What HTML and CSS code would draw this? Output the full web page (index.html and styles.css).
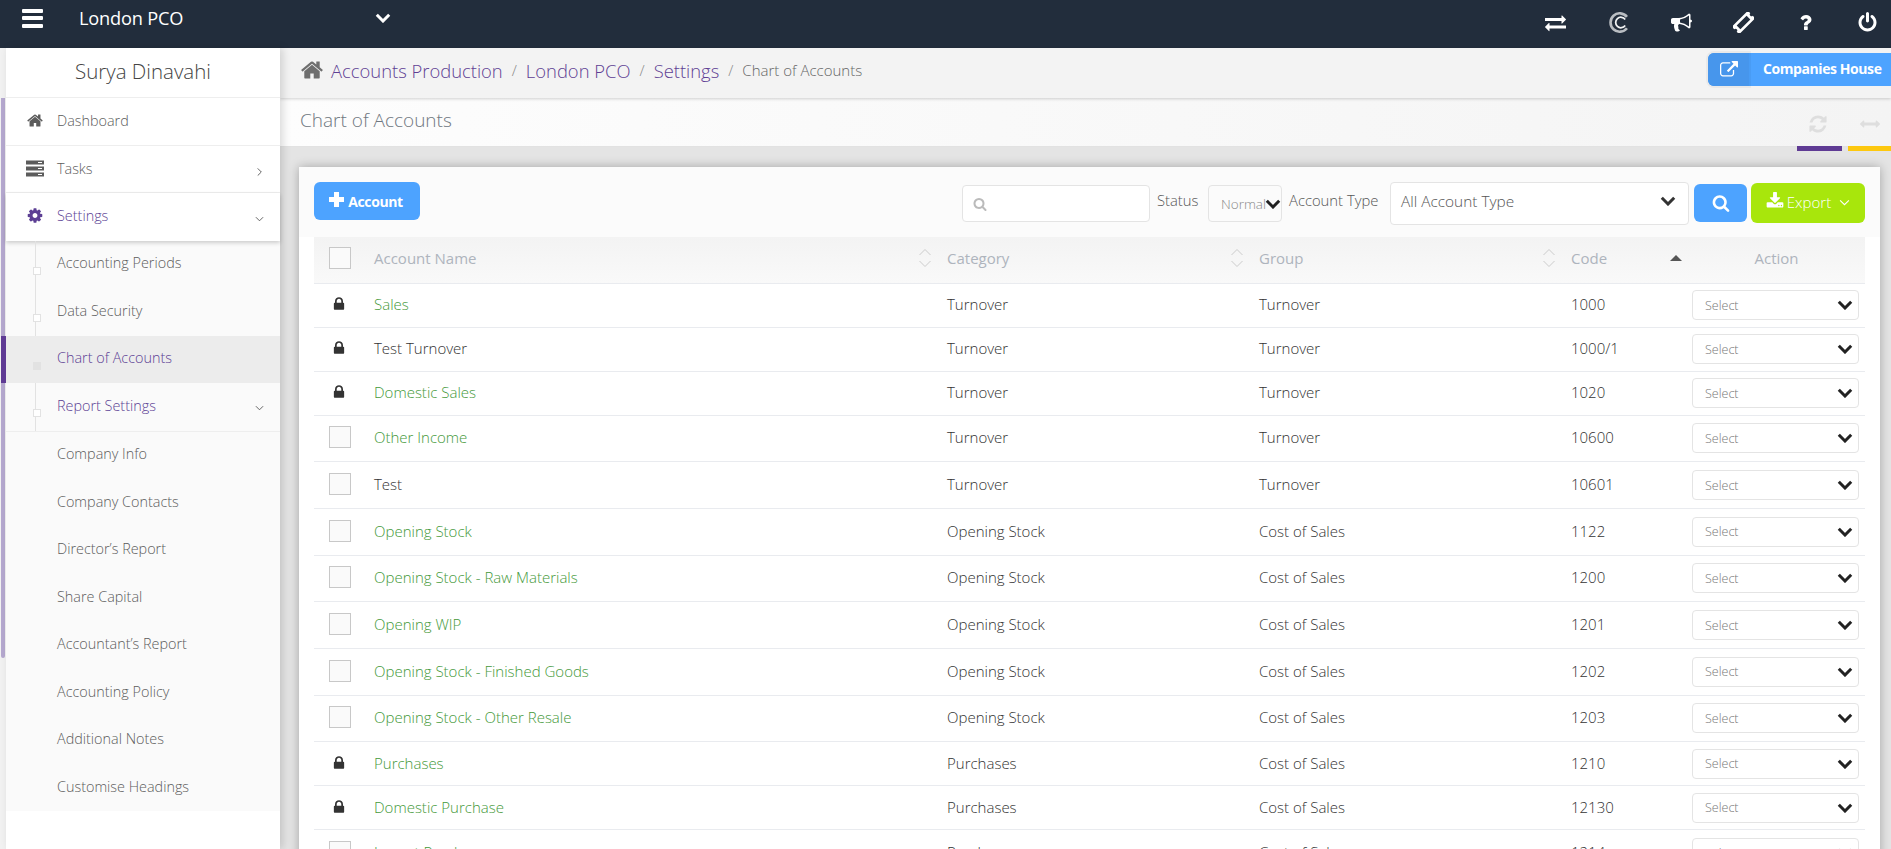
FILE: index.html
```html
<!DOCTYPE html>
<html lang="en">
<head>
<meta charset="utf-8">
<title>Chart of Accounts</title>
<link rel="stylesheet" href="styles.css">
</head>
<body>
<svg class="sprite" xmlns="http://www.w3.org/2000/svg">
  <symbol id="i-home" viewBox="0 0 1792 1792"><path d="M1472 992v480q0 26-19 45t-45 19h-384v-384h-256v384h-384q-26 0-45-19t-19-45v-480q0-1 .5-3t.5-3l575-474 575 474q1 2 1 6zm223-69l-62 74q-8 9-21 11h-3q-13 0-21-7l-692-577-692 577q-12 8-24 7-13-2-21-11l-62-74q-8-10-7-23.5t11-21.5l719-599q32-26 76-26t76 26l244 204v-195q0-14 9-23t23-9h192q14 0 23 9t9 23v408l219 182q10 8 11 21.5t-7 23.5z"/></symbol>
  <symbol id="i-cog" viewBox="0 0 1792 1792"><path d="M1152 896q0-106-75-181t-181-75-181 75-75 181 75 181 181 75 181-75 75-181zm512-109v222q0 12-8 23t-20 13l-185 28q-19 54-39 91 35 50 107 138 10 12 10 25t-9 23q-27 37-99 108t-94 71q-12 0-26-9l-138-108q-44 23-91 38-16 136-29 186-7 28-36 28h-222q-14 0-24.5-8.5t-11.5-21.5l-28-184q-49-16-90-37l-141 107q-10 9-25 9-14 0-25-11-126-114-165-168-7-10-7-23 0-12 8-23 15-21 51-66.5t54-70.5q-27-50-41-99l-183-27q-13-2-21-12.5t-8-23.5v-222q0-12 8-23t19-13l186-28q14-46 39-92-40-57-107-138-10-12-10-24 0-10 9-23 26-36 98.5-107.5t94.5-71.5q13 0 26 10l138 107q44-23 91-38 16-136 29-186 7-28 36-28h222q14 0 24.5 8.5t11.5 21.5l28 184q49 16 90 37l142-107q9-9 24-9 13 0 25 10 129 119 165 170 7 8 7 22 0 12-8 23-15 21-51 66.5t-54 70.5q26 50 41 98l183 28q13 2 21 12.5t8 23.5z"/></symbol>
  <symbol id="i-search" viewBox="0 0 1792 1792"><path d="M1216 832q0-185-131.5-316.5t-316.5-131.5-316.5 131.5-131.5 316.5 131.5 316.5 316.5 131.5 316.5-131.5 131.5-316.5zm512 832q0 52-38 90t-90 38q-54 0-90-38l-343-342q-179 124-399 124-143 0-273.5-55.5t-225-150-150-225-55.5-273.5 55.5-273.5 150-225 225-150 273.5-55.5 273.5 55.5 225 150 150 225 55.5 273.5q0 220-124 399l343 343q37 37 37 90z"/></symbol>
  <symbol id="i-lock" viewBox="0 0 1792 1792"><path d="M640 768h512v-192q0-106-75-181t-181-75-181 75-75 181v192zm832 96v576q0 40-28 68t-68 28h-960q-40 0-68-28t-28-68v-576q0-40 28-68t68-28h32v-192q0-184 132-316t316-132 316 132 132 316v192h32q40 0 68 28t28 68z"/></symbol>
  <symbol id="i-power" viewBox="0 0 1792 1792"><path d="M1664 896q0 156-61 298t-164 245-245 164-298 61-298-61-245-164-164-245-61-298q0-182 80.5-343t226.5-270q43-32 95.5-25t83.5 50q32 42 24.5 94.5t-49.5 84.5q-98 74-151.5 181t-53.5 228q0 104 40.5 198.5t109.5 163.5 163.5 109.5 198.5 40.5 198.5-40.5 163.5-109.5 109.5-163.5 40.5-198.5q0-121-53.5-228t-151.5-181q-42-32-49.5-84.5t24.5-94.5q31-43 84-50t95 25q146 109 226.5 270t80.5 343zm-640-768v640q0 52-38 90t-90 38-90-38-38-90v-640q0-52 38-90t90-38 90 38 38 90z"/></symbol>
  <symbol id="i-bullhorn" viewBox="0 0 1792 1792"><path d="M1664 640q53 0 90.5 37.5t37.5 90.5-37.5 90.5-90.5 37.5v384q0 52-38 90t-90 38q-417-347-812-380-58 19-91 66t-31 100.5 40 92.5q-20 33-23 65.5t6 58 33.5 55 48 50 61.5 50.5q-29 58-111.5 83t-168.5 11.5-132-55.5q-7-23-29.5-87.5t-32-94.5-23-89-15-101 3.5-98.5 22-110.5h-122q-66 0-113-47t-47-113v-192q0-66 47-113t113-47h480q435 0 896-384 52 0 90 38t38 90v384zm-128 604v-954q-394 302-768 343v270q377 42 768 341z"/></symbol>
  <symbol id="i-exchange" viewBox="0 0 1792 1792"><path d="M1792 1184v192q0 13-9.5 22.5t-22.5 9.5h-1376v192q0 13-9.5 22.5t-22.5 9.5q-12 0-24-10l-319-320q-9-9-9-22 0-14 9-23l320-320q9-9 23-9 13 0 22.5 9.5t9.5 22.5v192h1376q13 0 22.5 9.5t9.5 22.5zm0-544q0 14-9 23l-320 320q-9 9-23 9-13 0-22.5-9.5t-9.5-22.5v-192h-1376q-13 0-22.5-9.5t-9.5-22.5v-192q0-13 9.5-22.5t22.5-9.5h1376v-192q0-14 9-23t23-9q12 0 24 10l319 319q9 9 9 23z"/></symbol>
  <symbol id="i-question" viewBox="0 0 1792 1792"><path d="M1088 1256v240q0 16-12 28t-28 12h-240q-16 0-28-12t-12-28v-240q0-16 12-28t28-12h240q16 0 28 12t12 28zm316-600q0 54-15.5 101t-35 76.5-55 59.5-57.5 43.5-61 35.5q-41 23-68.5 65t-27.5 67q0 17-12 32.5t-28 15.5h-240q-15 0-25.5-18.5t-10.5-37.5v-45q0-83 65-156.5t143-108.5q59-27 84-56t25-76q0-42-46.5-74t-107.5-32q-65 0-108 29-35 25-107 115-13 16-31 16-12 0-25-8l-164-125q-13-10-15.5-25t5.5-28q160-266 464-266 80 0 161 31t146 83 106 127.5 41 158.5z"/></symbol>
  <symbol id="i-download" viewBox="0 0 1792 1792"><path d="M1344 1344q0-26-19-45t-45-19-45 19-19 45 19 45 45 19 45-19 19-45zm256 0q0-26-19-45t-45-19-45 19-19 45 19 45 45 19 45-19 19-45zm128-224v320q0 40-28 68t-68 28h-1472q-40 0-68-28t-28-68v-320q0-40 28-68t68-28h465l135 136q58 56 136 56t136-56l136-136h464q40 0 68 28t28 68zm-325-569q17 41-14 70l-448 448q-18 19-45 19t-45-19l-448-448q-31-29-14-70 17-39 59-39h256v-448q0-26 19-45t45-19h256q26 0 45 19t19 45v448h256q42 0 59 39z"/></symbol>
  <symbol id="i-external" viewBox="0 0 1792 1792"><path d="M1408 928v320q0 119-84.5 203.5t-203.5 84.5h-832q-119 0-203.5-84.5t-84.5-203.5v-832q0-119 84.5-203.5t203.5-84.5h704q14 0 23 9t9 23v64q0 14-9 23t-23 9h-704q-66 0-113 47t-47 113v832q0 66 47 113t113 47h832q66 0 113-47t47-113v-320q0-14 9-23t23-9h64q14 0 23 9t9 23zm384-864v512q0 26-19 45t-45 19-45-19l-176-176-652 652q-10 10-23 10t-23-10l-114-114q-10-10-10-23t10-23l652-652-176-176q-19-19-19-45t19-45 45-19h512q26 0 45 19t19 45z"/></symbol>
  <symbol id="i-refresh" viewBox="0 0 1792 1792"><path d="M1639 1056q0 5-1 7-64 268-268 434.5t-478 166.5q-146 0-282.5-55t-243.5-157l-129 129q-19 19-45 19t-45-19-19-45v-448q0-26 19-45t45-19h448q26 0 45 19t19 45-19 45l-137 137q71 66 161 102t187 36q134 0 250-65t186-179q11-17 53-117 8-23 30-23h192q13 0 22.5 9.5t9.5 22.5zm25-800v448q0 26-19 45t-45 19h-448q-26 0-45-19t-19-45 19-45l138-138q-148-137-349-137-134 0-250 65t-186 179q-11 17-53 117-8 23-30 23h-199q-13 0-22.5-9.5t-9.5-22.5v-7q65-268 270-434.5t480-166.5q146 0 284 55.5t245 156.5l130-129q19-19 45-19t45 19 19 45z"/></symbol>
  <symbol id="i-arrows-h" viewBox="0 0 1792 1792"><path d="M1792 896q0 26-19 45l-256 256q-19 19-45 19t-45-19-19-45v-128h-1024v128q0 26-19 45t-45 19-45-19l-256-256q-19-19-19-45t19-45l256-256q19-19 45-19t45 19 19 45v128h1024v-128q0-26 19-45t45-19 45 19l256 256q19 19 19 45z"/></symbol>
  <symbol id="i-ticket" viewBox="0 0 24 24"><g transform="rotate(-45 12 12)"><path fill-rule="evenodd" d="M-1 6h26v4a2 2 0 0 0 0 4v4H-1v-4a2 2 0 0 0 0-4zM4 9v6h16V9z"/></g></symbol>
  <symbol id="i-cc" viewBox="0 0 24 24"><path d="M20.500 5.500A10.500 10.500 0 1 0 20.500 18.500" fill="none" stroke="#b9bdc2" stroke-width="3"/><path d="M18.500 8.500A6 6 0 1 0 18.500 15.500" fill="none" stroke="#f2f3f4" stroke-width="2"/></symbol>
  <symbol id="i-server" viewBox="0 0 18 16"><path d="M0 0h18v4H0zM0 6h18v4H0zM0 12h18v4H0z"/><path fill="#fff" d="M12 1.400h4v1.200h-4zM12 7.400h4v1.200h-4zM12 13.400h4v1.200h-4z"/></symbol>
  <symbol id="i-chev" viewBox="0 0 16 10"><path d="M1.800 1.800 8 8 14.200 1.800" fill="none" stroke="currentColor" stroke-width="3"/></symbol>
  <symbol id="i-thin-chev" viewBox="0 0 10 6"><path d="M1 1 5 5 9 1" fill="none" stroke="currentColor" stroke-width="1"/></symbol>
  <symbol id="i-sort" viewBox="0 0 14 22"><path d="M1.500 8 7 2.500 12.500 8M1.500 14 7 19.500 12.500 14" fill="none" stroke="currentColor" stroke-width="1"/></symbol>
</svg>

<header class="topbar">
  <div class="top-left">
    <button class="burger" aria-label="Menu"><span></span><span></span><span></span></button>
    <div class="firm">London PCO</div>
    <svg class="firm-chev"><use href="#i-chev"/></svg>
  </div>
  <nav class="top-icons">
    <svg class="ti ti-ex"><use href="#i-exchange"/></svg>
    <svg class="ti"><use href="#i-cc"/></svg>
    <svg class="ti"><use href="#i-bullhorn"/></svg>
    <svg class="ti"><use href="#i-ticket"/></svg>
    <svg class="ti"><use href="#i-question"/></svg>
    <svg class="ti"><use href="#i-power"/></svg>
  </nav>
</header>

<div class="shell">
  <div class="rail"><div class="rail-thumb"></div></div>

  <aside class="sidebar">
    <div class="user">Surya Dinavahi</div>
    <a class="nav-main"><svg class="nav-ic"><use href="#i-home"/></svg>Dashboard</a>
    <a class="nav-main"><svg class="nav-ic"><use href="#i-server"/></svg>Tasks<svg class="nav-chev nav-chev-r"><use href="#i-thin-chev"/></svg></a>
    <a class="nav-main nav-open"><svg class="nav-ic"><use href="#i-cog"/></svg>Settings<svg class="nav-chev"><use href="#i-thin-chev"/></svg></a>
    <div class="subnav">
      <div class="subgroup">
        <a class="sub bul">Accounting Periods</a>
        <a class="sub bul">Data Security</a>
        <a class="sub bul sub-active">Chart of Accounts</a>
        <a class="sub bul sub-purple">Report Settings<svg class="nav-chev"><use href="#i-thin-chev"/></svg></a>
      </div>
      <a class="sub">Company Info</a>
      <a class="sub">Company Contacts</a>
      <a class="sub">Director’s Report</a>
      <a class="sub">Share Capital</a>
      <a class="sub">Accountant’s Report</a>
      <a class="sub">Accounting Policy</a>
      <a class="sub">Additional Notes</a>
      <a class="sub">Customise Headings</a>
    </div>
  </aside>

  <main class="main">
    <div class="crumbs">
      <svg class="crumb-home"><use href="#i-home"/></svg>
      <a class="crumb">Accounts Production</a><span class="sep">/</span>
      <a class="crumb">London PCO</a><span class="sep">/</span>
      <a class="crumb">Settings</a><span class="sep">/</span>
      <span class="crumb-cur">Chart of Accounts</span>
      <a class="ch-btn"><span class="ch-ic"><svg><use href="#i-external"/></svg></span><span class="ch-txt">Companies House</span></a>
    </div>

    <div class="titlebar">
      <h1>Chart of Accounts</h1>
      <div class="tools">
        <div class="tool tool-p"><svg><use href="#i-refresh"/></svg></div>
        <div class="tool tool-y"><svg><use href="#i-arrows-h"/></svg></div>
      </div>
    </div>

    <div class="content">
      <section class="card">
        <div class="toolbar">
          <button class="btn-add"><span class="plus"></span>Account</button>
          <div class="filters">
            <div class="search"><svg><use href="#i-search"/></svg></div>
            <label class="flabel">Status</label>
            <div class="status"><span>Normal</span><svg><use href="#i-chev"/></svg></div>
            <label class="flabel flabel-type">Account Type</label>
            <div class="acct-type"><span>All Account Type</span><svg><use href="#i-chev"/></svg></div>
            <button class="btn-search"><svg><use href="#i-search"/></svg></button>
            <button class="btn-export"><svg class="dl"><use href="#i-download"/></svg>Export<svg class="ex-chev"><use href="#i-thin-chev"/></svg></button>
          </div>
        </div>

        <table class="grid">
          <colgroup><col class="c1"><col class="c2"><col class="c3"><col class="c4"><col class="c5"><col class="c6"></colgroup>
          <thead>
            <tr>
              <th><span class="cb cb-h"></span></th>
              <th><div class="th-in">Account Name<svg class="srt"><use href="#i-sort"/></svg></div></th>
              <th><div class="th-in">Category<svg class="srt"><use href="#i-sort"/></svg></div></th>
              <th><div class="th-in">Group<svg class="srt"><use href="#i-sort"/></svg></div></th>
              <th><div class="th-in th-code">Code<span class="tri"></span></div></th>
              <th class="th-action">Action</th>
            </tr>
          </thead>
          <tbody>
            <tr class="r-lock"><td><svg class="lock"><use href="#i-lock"/></svg></td><td class="lnk">Sales</td><td>Turnover</td><td>Turnover</td><td>1000</td><td><div class="sel"><span>Select</span><svg><use href="#i-chev"/></svg></div></td></tr>
            <tr class="r-lock"><td><svg class="lock"><use href="#i-lock"/></svg></td><td>Test Turnover</td><td>Turnover</td><td>Turnover</td><td>1000/1</td><td><div class="sel"><span>Select</span><svg><use href="#i-chev"/></svg></div></td></tr>
            <tr class="r-lock"><td><svg class="lock"><use href="#i-lock"/></svg></td><td class="lnk">Domestic Sales</td><td>Turnover</td><td>Turnover</td><td>1020</td><td><div class="sel"><span>Select</span><svg><use href="#i-chev"/></svg></div></td></tr>
            <tr class="r-cb"><td><span class="cb"></span></td><td class="lnk">Other Income</td><td>Turnover</td><td>Turnover</td><td>10600</td><td><div class="sel"><span>Select</span><svg><use href="#i-chev"/></svg></div></td></tr>
            <tr class="r-cb"><td><span class="cb"></span></td><td>Test</td><td>Turnover</td><td>Turnover</td><td>10601</td><td><div class="sel"><span>Select</span><svg><use href="#i-chev"/></svg></div></td></tr>
            <tr class="r-cb"><td><span class="cb"></span></td><td class="lnk">Opening Stock</td><td>Opening Stock</td><td>Cost of Sales</td><td>1122</td><td><div class="sel"><span>Select</span><svg><use href="#i-chev"/></svg></div></td></tr>
            <tr class="r-cb"><td><span class="cb"></span></td><td class="lnk">Opening Stock - Raw Materials</td><td>Opening Stock</td><td>Cost of Sales</td><td>1200</td><td><div class="sel"><span>Select</span><svg><use href="#i-chev"/></svg></div></td></tr>
            <tr class="r-cb"><td><span class="cb"></span></td><td class="lnk">Opening WIP</td><td>Opening Stock</td><td>Cost of Sales</td><td>1201</td><td><div class="sel"><span>Select</span><svg><use href="#i-chev"/></svg></div></td></tr>
            <tr class="r-cb"><td><span class="cb"></span></td><td class="lnk">Opening Stock - Finished Goods</td><td>Opening Stock</td><td>Cost of Sales</td><td>1202</td><td><div class="sel"><span>Select</span><svg><use href="#i-chev"/></svg></div></td></tr>
            <tr class="r-cb"><td><span class="cb"></span></td><td class="lnk">Opening Stock - Other Resale</td><td>Opening Stock</td><td>Cost of Sales</td><td>1203</td><td><div class="sel"><span>Select</span><svg><use href="#i-chev"/></svg></div></td></tr>
            <tr class="r-lock"><td><svg class="lock"><use href="#i-lock"/></svg></td><td class="lnk">Purchases</td><td>Purchases</td><td>Cost of Sales</td><td>1210</td><td><div class="sel"><span>Select</span><svg><use href="#i-chev"/></svg></div></td></tr>
            <tr class="r-lock"><td><svg class="lock"><use href="#i-lock"/></svg></td><td class="lnk">Domestic Purchase</td><td>Purchases</td><td>Cost of Sales</td><td>12130</td><td><div class="sel"><span>Select</span><svg><use href="#i-chev"/></svg></div></td></tr>
            <tr class="r-cb"><td><span class="cb"></span></td><td class="lnk">Import Purchases</td><td>Purchases</td><td>Cost of Sales</td><td>1214</td><td><div class="sel"><span>Select</span><svg><use href="#i-chev"/></svg></div></td></tr>
          </tbody>
        </table>
      </section>
    </div>
  </main>
</div>
</body>
</html>
```

FILE: styles.css
```css
* { box-sizing: border-box; }
html, body { margin: 0; height: 849px; overflow: hidden; }
body { font-family: "Open Sans", "Noto Sans", sans-serif; font-size: 15px; font-weight: 300; color: #333; background: #fff; }
.sprite { display: none; }
svg { fill: currentColor; display: block; }
button { font: inherit; border: 0; padding: 0; cursor: pointer; }

/* top bar */
.topbar { height: 48px; background: #222d3c; color: #fff; display: flex; align-items: center; justify-content: space-between; }
.top-left { display: flex; align-items: center; padding-bottom: 12px; }
.burger { width: 21px; margin-left: 22px; background: none; display: flex; flex-direction: column; gap: 3.5px; }
.burger span { display: block; height: 4px; background: #fff; border-radius: 1px; }
.firm { margin-left: 36px; width: 296px; font-size: 18.2px; font-weight: 400; letter-spacing: -.2px; color: #fff; }
.firm-chev { width: 16px; height: 10px; color: #fff; }
.top-icons { display: flex; align-items: center; gap: 41px; padding: 0 13px 3px 0; }
.ti { width: 21px; height: 21px; }
.ti-ex { margin-right: 2px; }

/* shell */
.shell { display: flex; height: 801px; background: #e4e4e4; }
.rail { width: 6px; background: #f1f1f1; padding: 50px 1px 0; }
.rail-thumb { height: 560px; background: #b5a8cf; border-radius: 0 0 2px 2px; }
.sidebar { width: 274px; background: #fff; box-shadow: 3px 0 8px rgba(0,0,0,.14); position: relative; z-index: 2; }
.user { height: 50px; padding-top: 9px; text-align: center; font-size: 20.5px; color: #444; border-bottom: 1px solid #eee; }
.nav-main { height: 47.5px; display: flex; align-items: center; padding: 0 16px 2px 20px; color: #5c5c5c; font-size: 14.4px; border-bottom: 1px solid #eee; }
.nav-main:nth-of-type(2) { padding-bottom: 0; }
.nav-open { color: #5c3f94; border-bottom: 0; box-shadow: 0 2px 4px rgba(0,0,0,.18); position: relative; }
.nav-ic { width: 18px; height: 17px; margin-right: 13px; flex: none; }
.nav-chev { width: 9px; height: 6px; margin: 6px 0 0 auto; color: #555; }
.nav-chev-r { transform: rotate(-90deg); }
.subnav { background: #fafafa; height: 570px; }
.subgroup { position: relative; border-bottom: 1px solid #eee; }
.subgroup::before { content: ""; position: absolute; left: 29px; top: 0; bottom: 0; width: 1px; background: #e2e2e2; }
.sub { height: 47.5px; display: flex; align-items: center; padding: 0 16px 3px 51px; color: #5c5c5c; font-size: 14.4px; position: relative; }
.bul::before { content: ""; position: absolute; left: 27px; top: 26px; width: 6px; height: 6px; background: #fff; border: 1px solid #e2e2e2; }
.sub-active { background: #ececec; color: #5c3f94; }
.sub-active::before { background: #e2e2e2; }
.sub-active::after { content: ""; position: absolute; left: -5px; top: 0; bottom: 0; width: 5px; background: #5f3b94; }
.sub-purple { color: #5c3f94; }

/* main */
.main { flex: 1; min-width: 0; display: flex; flex-direction: column; }
.crumbs { height: 50px; background: #f3f3f3; display: flex; align-items: center; padding: 0 0 6px 20px; box-shadow: 0 1px 3px rgba(0,0,0,.18); position: relative; z-index: 1; }
.crumb-home { width: 24px; height: 24px; color: #6e6e6e; margin-right: 7px; }
.crumb { font-size: 18.4px; color: #5f3f94; }
.sep { margin: 0 9px; color: #888; font-size: 15px; }
.crumb-cur { color: #666; font-size: 15px; }
.ch-btn { margin-left: auto; align-self: flex-start; margin-top: 5px; height: 33px; width: 183px; background: #4da3ff; color: #fff; border-radius: 6px 0 0 6px; display: flex; font-size: 14px; font-weight: 700; align-items: center; }
.ch-ic { width: 41px; height: 33px; background: #4796ec; border-radius: 6px 0 0 6px; display: flex; align-items: center; justify-content: center; box-shadow: 0 0 0 2px rgba(0,0,0,.04); }
.ch-ic svg { width: 18px; height: 18px; }
.ch-txt { margin-left: 14px; letter-spacing: -.42px; padding-bottom: 2px; }
.titlebar { height: 49px; background: linear-gradient(90deg, #fdfdfd, #f4f4f4); border-bottom: 1px solid #e2e2e2; display: flex; justify-content: space-between; align-items: center; padding-left: 20px; }
h1 { margin: 0 0 4px; font-size: 19px; font-weight: 300; color: #6f7780; }
.tools { display: flex; gap: 6px; height: 100%; }
.tool { width: 45px; position: relative; display: flex; align-items: center; justify-content: center; color: #dedede; padding-top: 4px; }
.tool-p { padding-right: 4px; }
.tool-y { width: 43px; }
.tool::after { content: ""; position: absolute; left: 0; right: 0; top: 48px; height: 5px; }
.tool svg { width: 20px; height: 20px; }
.tool-p::after { background: #5f3b94; }
.tool-y::after { background: #fdc80f; }
.content { flex: 1; min-height: 0; padding: 20px 11px 0 19px; overflow: hidden; }
.card { height: 720px; box-shadow: 0 0 10px rgba(0,0,0,.28); padding: 0 15px; overflow: hidden; background: linear-gradient(#fbfbfb 70px, #fff 70px); }

/* toolbar */
.toolbar { height: 70px; display: flex; align-items: flex-start; justify-content: space-between; }
.btn-add { margin-top: 15px; width: 106px; height: 38px; background: #4da3ff; color: #fff; border-radius: 6px; font-size: 14px; font-weight: 700; display: flex; align-items: center; justify-content: center; letter-spacing: -.4px; padding-right: 2px; }
.plus { width: 15px; height: 15px; margin-right: 4px; margin-bottom: 3px; background: linear-gradient(#fff,#fff) center/15px 5px no-repeat, linear-gradient(#fff,#fff) center/5px 15px no-repeat; }
.filters { display: flex; align-items: flex-start; color: #555; }
.search { width: 188px; height: 37px; margin-top: 18px; border: 1px solid #e4e4e4; border-radius: 4px; background: #fff; color: #bbb; padding: 11px 0 0 10px; }
.search svg { width: 14px; height: 14px; }
.flabel { margin: 23px 7px 0 7px; font-size: 14.8px; white-space: nowrap; width: 44px; }
.flabel-type { width: 93px; margin-right: 8px; }
.status { width: 74px; height: 37px; margin-top: 18px; border: 1px solid #e4e4e4; border-radius: 4px; padding-left: 12px; display: flex; align-items: center; position: relative; overflow: hidden; color: #888; font-size: 13.5px; }
.status svg { position: absolute; right: 0; top: 13px; width: 16px; height: 10px; color: #222; }
.acct-type { width: 299px; height: 43px; margin-top: 15px; border: 1px solid #e4e4e4; border-radius: 4px; background: #fff; display: flex; align-items: center; padding: 0 12px 5px 10px; justify-content: space-between; color: #555; font-size: 15.4px; }
.acct-type svg { width: 16px; height: 10px; color: #333; }
.btn-search { width: 53px; height: 38px; margin: 17px 0 0 5px; background: #4da3ff; color: #fff; border-radius: 6px; display: flex; align-items: center; justify-content: center; }
.btn-search svg { width: 18px; height: 18px; }
.btn-export { width: 114px; height: 40px; margin: 16px 0 0 4px; background: #a8e60c; color: #fff; border-radius: 6px; display: flex; align-items: center; justify-content: center; font-size: 15px; padding-bottom: 2px; }
.dl { width: 18px; height: 18px; margin-right: 3px; margin-bottom: 3px; }
.ex-chev { width: 11px; height: 7px; margin-left: 8px; }

/* table */
.grid { width: 1551px; table-layout: fixed; border-collapse: collapse; }
.c1 { width: 60px; } .c2 { width: 573px; } .c3 { width: 312px; } .c4 { width: 312px; } .c5 { width: 121px; } .c6 { width: 173px; }
thead tr { height: 46px; background: linear-gradient(#f3f3f3, #f9f9f9); }
th { padding: 0 0 3px; text-align: left; color: #aeb4bd; font-weight: 400; font-size: 15px; border-bottom: 1px solid #e9ebef; }
th:first-child, td:first-child { padding-left: 15px; }
.th-in { display: flex; justify-content: space-between; align-items: center; padding-right: 15px; }
.th-code { padding-right: 10px; }
.srt { width: 14px; height: 22px; color: #ccc; }
.tri { width: 0; height: 0; border-left: 6px solid transparent; border-right: 6px solid transparent; border-bottom: 6px solid #555; }
.th-action { text-align: center; padding-right: 4px; }
td { padding: 0 0 2px; color: #333; border-bottom: 1px solid #e9ebef; font-size: 15px; background: #fff; }
td.lnk { color: #45993a; }
.r-lock { height: 44px; }
.r-cb { height: 46.7px; }
.cb { display: block; width: 22px; height: 22px; border: 1px solid #c8c8c8; background: #fafafa; }
.lock { width: 16px; height: 16px; color: #333; margin-left: 2px; }
.sel { width: 167px; height: 30px; margin-top: 2px; border: 1px solid #e4e4e4; border-radius: 4px; background: #fff; display: flex; align-items: center; justify-content: space-between; padding: 0 5px 0 12px; color: #777; font-size: 12.5px; }
.sel svg { width: 16px; height: 10px; color: #222; }
```
